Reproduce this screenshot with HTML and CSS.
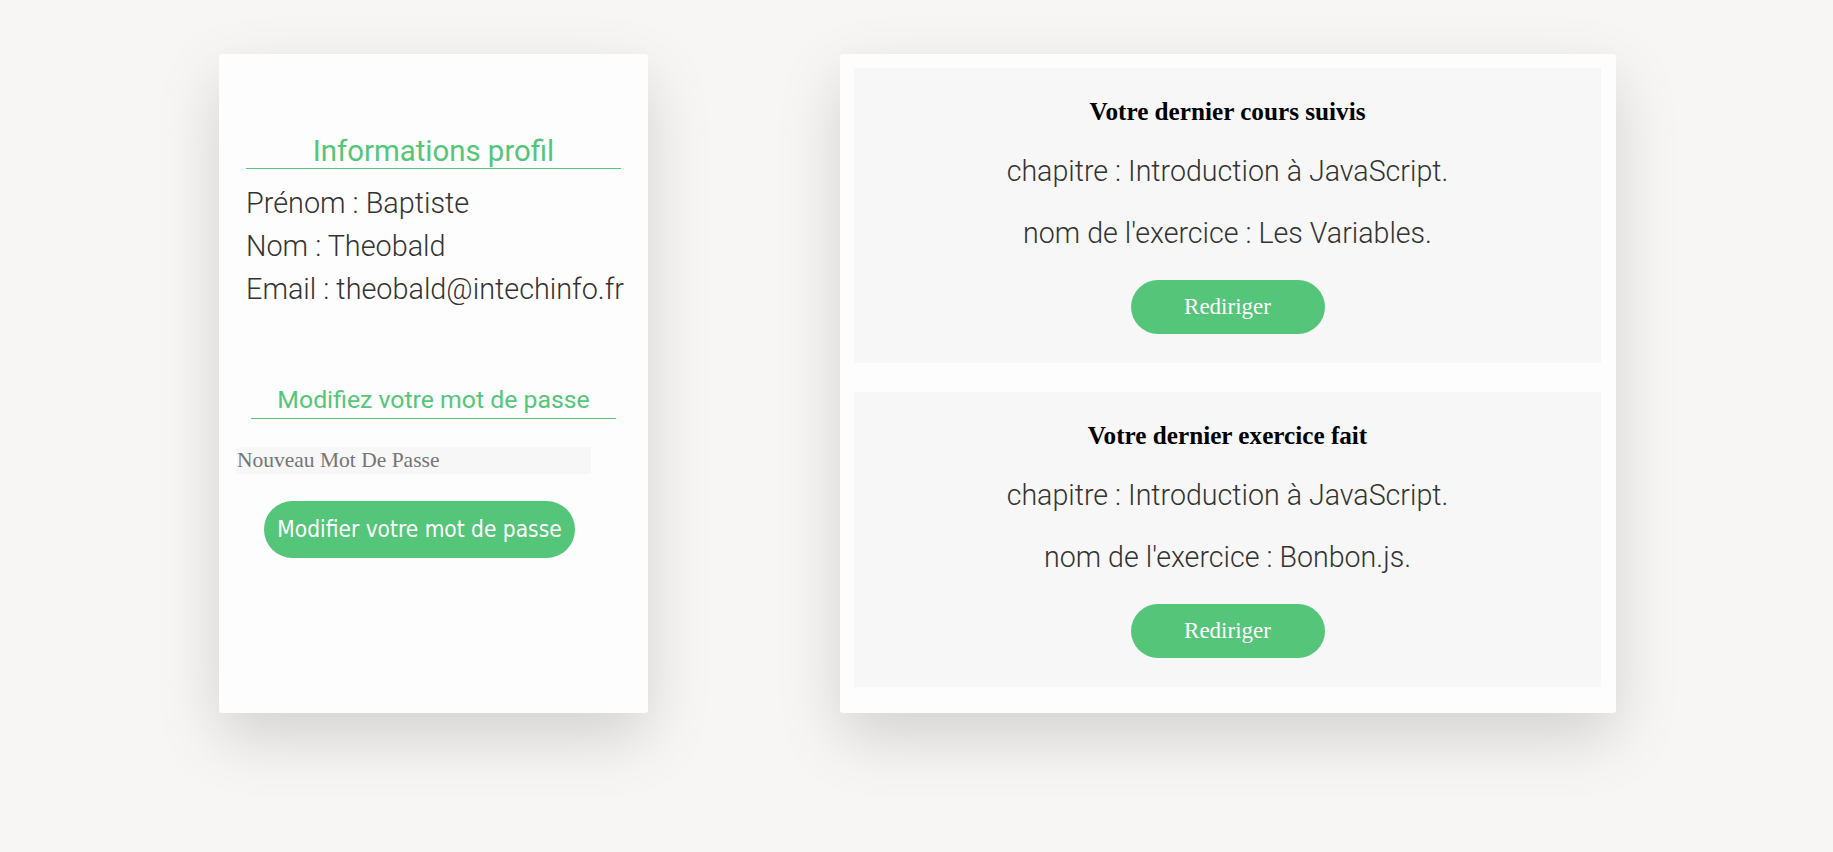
FILE: index.html
```html
<!DOCTYPE html>
<html lang="fr">
<head>
<meta charset="utf-8">
<title>Profil</title>
<link rel="stylesheet" href="styles.css">
</head>
<body>
<main class="page">
  <section class="card profile">
    <h2 class="profile-title">Informations profil</h2>
    <div class="info">
      <div class="info-line">Prénom : Baptiste</div>
      <div class="info-line">Nom : Theobald</div>
      <div class="info-line">Email : theobald@intechinfo.fr</div>
    </div>
    <form class="pw-form">
      <h3 class="pw-title">Modifiez votre mot de passe</h3>
      <input class="pw-input" type="password" placeholder="Nouveau Mot De Passe">
      <button class="pw-btn" type="button">Modifier votre mot de passe</button>
    </form>
  </section>
  <section class="card activity">
    <div class="box">
      <h3 class="box-title">Votre dernier cours suivis</h3>
      <p class="box-line">chapitre : Introduction à JavaScript.</p>
      <p class="box-line">nom de l'exercice : Les Variables.</p>
      <button class="redir" type="button">Rediriger</button>
    </div>
    <div class="box">
      <h3 class="box-title">Votre dernier exercice fait</h3>
      <p class="box-line">chapitre : Introduction à JavaScript.</p>
      <p class="box-line">nom de l'exercice : Bonbon.js.</p>
      <button class="redir" type="button">Rediriger</button>
    </div>
  </section>
</main>
</body>
</html>
```
FILE: styles.css
```css
* { box-sizing: border-box; }
html, body { margin: 0; padding: 0; }
body {
  background: #f7f6f4;
  font-family: Roboto, "Liberation Sans", sans-serif;
  font-weight: 300;
  color: #333;
  height: 852px;
  overflow: hidden;
}
.page {
  display: flex;
  justify-content: center;
  align-items: stretch;
  gap: 192px;
  padding-top: 54px;
  padding-left: 2px;
}
.card {
  background: #fdfdfd;
  border-radius: 3px;
  box-shadow: 0 24px 64px rgba(0, 0, 0, 0.15);
}
.profile {
  width: 429px;
  padding: 80px 27px 0;
}
.profile-title {
  margin: 0;
  font-size: 29.4px;
  font-weight: 400;
  line-height: 34px;
  color: #55c57a;
  text-align: center;
  border-bottom: 1px solid #55c57a;
}
.info {
  margin-top: 13px;
}
.info-line {
  font-size: 28.8px;
  line-height: 43.2px;
  white-space: nowrap;
}
.pw-form {
  margin-top: 73px;
  display: flex;
  flex-direction: column;
  align-items: flex-start;
}
.pw-title {
  align-self: stretch;
  margin: 0 5px;
  padding-bottom: 3px;
  font-size: 24.8px;
  font-weight: 400;
  line-height: 30px;
  color: #55c57a;
  text-align: center;
  border-bottom: 1px solid #55c57a;
}
.pw-input {
  margin: 28px 0 0 -9px;
  width: 354px;
  height: 27px;
  padding: 0;
  border: none;
  border-radius: 2px;
  background: #f7f7f7;
  font-family: "Liberation Serif", serif;
  font-size: 21.5px;
  color: #333;
  outline: none;
}
.pw-input::placeholder { color: #757575; }
.pw-btn {
  margin: 27px 0 0 18px;
  width: 311px;
  height: 57px;
  border: none;
  border-radius: 29px;
  background: #55c57a;
  color: #fff;
  font-family: "DejaVu Sans Condensed", "DejaVu Sans", sans-serif;
  font-size: 22.5px;
  padding: 0;
}
.activity {
  width: 776px;
  padding: 14px 15px 26px 14px;
  display: flex;
  flex-direction: column;
  gap: 29px;
}
.box {
  background: #f7f7f7;
  height: 295px;
  padding: 30px 0 0;
  display: flex;
  flex-direction: column;
  align-items: center;
}
.box-title {
  margin: 0;
  font-family: "Liberation Serif", serif;
  font-weight: 700;
  font-size: 25.2px;
  line-height: 28px;
  color: #000;
}
.box-line {
  margin: 28px 0 0;
  font-size: 28.6px;
  line-height: 34px;
  white-space: nowrap;
}
.redir {
  margin-top: 30px;
  width: 194px;
  height: 54px;
  border: none;
  border-radius: 27px;
  background: #55c57a;
  color: #fff;
  font-family: "Liberation Serif", serif;
  font-size: 23px;
  padding: 0;
}
```
